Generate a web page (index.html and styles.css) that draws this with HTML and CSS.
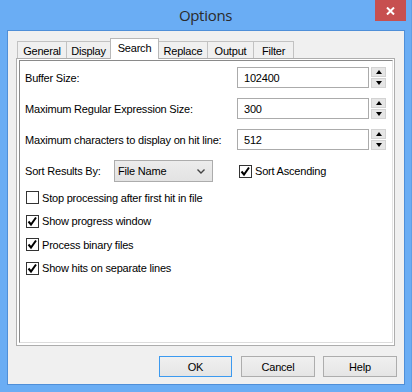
FILE: index.html
```html
<!DOCTYPE html>
<html>
<head>
<meta charset="utf-8">
<link rel="stylesheet" href="styles.css">
</head>
<body>
<div class="window">
  <div class="titlebar">
    <span class="title">Options</span>
    <div class="close">
      <svg width="9" height="8" viewBox="0 0 9 8"><path d="M1 0.5 L8 7.5 M8 0.5 L1 7.5" stroke="#fff" stroke-width="2" fill="none"/></svg>
    </div>
  </div>
  <div class="client">
    <div class="tabs">
      <div class="tab t-general">General</div>
      <div class="tab t-display">Display</div>
      <div class="tab t-search active">Search</div>
      <div class="tab t-replace">Replace</div>
      <div class="tab t-output">Output</div>
      <div class="tab t-filter">Filter</div>
    </div>
    <div class="panel">
      <div class="page">
        <div class="row">
          <span class="label">Buffer Size:</span>
          <div class="field">102400</div>
          <div class="spin"><div class="spin-btn"><span class="tri up"></span></div><div class="spin-btn"><span class="tri down"></span></div></div>
        </div>
        <div class="row">
          <span class="label">Maximum Regular Expression Size:</span>
          <div class="field">300</div>
          <div class="spin"><div class="spin-btn"><span class="tri up"></span></div><div class="spin-btn"><span class="tri down"></span></div></div>
        </div>
        <div class="row">
          <span class="label">Maximum characters to display on hit line:</span>
          <div class="field">512</div>
          <div class="spin"><div class="spin-btn"><span class="tri up"></span></div><div class="spin-btn"><span class="tri down"></span></div></div>
        </div>
        <div class="row sortrow">
          <span class="sortlabel">Sort Results By:</span>
          <div class="combo"><span>File Name</span>
            <svg width="8" height="5" viewBox="0 0 8 5"><path d="M0.5 0.5 L4 4 L7.5 0.5" stroke="#444" stroke-width="1.4" fill="none"/></svg>
          </div>
          <label class="check sortcheck"><span class="box checked"><svg width="11" height="11" viewBox="0 0 11 11"><path d="M1.5 5.5 L4 8.5 L9 1.5" stroke="#000" stroke-width="2" fill="none"/></svg></span>Sort Ascending</label>
        </div>
        <div class="checks">
          <label class="check"><span class="box"></span>Stop processing after first hit in file</label>
          <label class="check"><span class="box checked"><svg width="11" height="11" viewBox="0 0 11 11"><path d="M1.5 5.5 L4 8.5 L9 1.5" stroke="#000" stroke-width="2" fill="none"/></svg></span>Show progress window</label>
          <label class="check"><span class="box checked"><svg width="11" height="11" viewBox="0 0 11 11"><path d="M1.5 5.5 L4 8.5 L9 1.5" stroke="#000" stroke-width="2" fill="none"/></svg></span>Process binary files</label>
          <label class="check"><span class="box checked"><svg width="11" height="11" viewBox="0 0 11 11"><path d="M1.5 5.5 L4 8.5 L9 1.5" stroke="#000" stroke-width="2" fill="none"/></svg></span>Show hits on separate lines</label>
        </div>
      </div>
    </div>
    <div class="buttons">
      <div class="btn default">OK</div>
      <div class="btn">Cancel</div>
      <div class="btn">Help</div>
    </div>
  </div>
</div>
</body>
</html>
```

FILE: styles.css
```css
* { box-sizing: border-box; }
html, body { margin: 0; padding: 0; }
body {
  width: 412px;
  height: 392px;
  overflow: hidden;
  font-family: "Liberation Sans", Arial, sans-serif;
  font-size: 11px;
  letter-spacing: -0.2px;
  color: #000;
}
.window {
  width: 412px;
  height: 392px;
  background: #6aadf4;
  display: flex;
  flex-direction: column;
  padding: 0 7px 0 7px;
  border-right: 1px solid #5f9fe6;
}
.titlebar {
  position: relative;
  height: 30px;
  flex: none;
  display: flex;
  align-items: center;
  justify-content: center;
}
.title {
  font-family: "Open Sans", "Noto Sans", sans-serif;
  font-size: 15px;
  letter-spacing: -0.3px;
  color: #2b2b2b;
}
.close {
  position: absolute;
  top: 0;
  right: -2px;
  width: 31px;
  height: 21px;
  background: #c75050;
  display: flex;
  align-items: center;
  justify-content: center;
}
.close svg { display: block; }
.client {
  width: 398px;
  height: 355px;
  background: #f0f0f0;
  border: 1px solid #4f8fd8;
  display: flex;
  flex-direction: column;
  padding: 7px 7px 0 8px;
}
.tabs {
  display: flex;
  align-items: flex-end;
  height: 20px;
  margin-left: 1px;
  position: relative;
  z-index: 2;
}
.tab {
  height: 17px;
  border: 1px solid #c2c2c2;
  border-bottom: none;
  background: #f0f0f0;
  display: flex;
  align-items: center;
  justify-content: center;
  padding-top: 1px;
  margin-left: -1px;
  color: #000;
}
.tab:first-child { margin-left: 0; }
.tab.active {
  height: 21px;
  background: #fff;
  margin-bottom: -1px;
  padding-top: 0;
  padding-bottom: 3px;
  position: relative;
  z-index: 3;
  border-color: #b8b8b8;
}
.t-general { width: 50px; }
.t-display { width: 45px; }
.t-search { width: 49px; }
.t-replace { width: 50px; }
.t-output { width: 47px; }
.t-filter { width: 41px; }
.panel {
  width: 379px;
  height: 288px;
  border: 1px solid #adadad;
  background: #fff;
  padding: 1px 1px 2px 2px;
  position: relative;
  z-index: 1;
}
.page {
  height: 100%;
  border-top: 1px solid #8a8a8a;
  border-left: 1px solid #8a8a8a;
  border-right: 1px solid #e3e3e3;
  border-bottom: 1px solid #dcdcdc;
  padding: 6px 6px 0 5px;
  display: flex;
  flex-direction: column;
  gap: 10px;
}
.row {
  display: flex;
  align-items: center;
  height: 21px;
}
.label { flex: 1; }
.field {
  width: 132px;
  height: 21px;
  border: 1px solid #ababab;
  background: #fff;
  padding-left: 6px;
  display: flex;
  align-items: center;
}
.spin {
  width: 15px;
  height: 21px;
  margin-left: 2px;
  display: flex;
  flex-direction: column;
  gap: 1px;
}
.spin-btn {
  flex: 1;
  background: #e6e6e6;
  border: 1px solid #d3d3d3;
  display: flex;
  align-items: center;
  justify-content: center;
}
.tri {
  width: 0;
  height: 0;
  border-left: 3.5px solid transparent;
  border-right: 3.5px solid transparent;
}
.tri.up { border-bottom: 4px solid #000; }
.tri.down { border-top: 4px solid #000; }
.sortrow { height: 22px; }
.sortlabel { width: 89px; flex: none; }
.combo {
  width: 99px;
  height: 22px;
  border: 1px solid #acacac;
  background: linear-gradient(#ececec, #e3e3e3);
  display: flex;
  align-items: center;
  justify-content: space-between;
  padding: 0 7px 0 3px;
}
.combo svg { display: block; }
.check {
  display: flex;
  align-items: center;
  gap: 3px;
}
.sortcheck { margin-left: 26px; }
.box {
  width: 13px;
  height: 13px;
  border: 1px solid #333;
  background: #fff;
  flex: none;
  display: flex;
  align-items: center;
  justify-content: center;
}
.box svg { display: block; }
.checks {
  display: flex;
  flex-direction: column;
  margin-top: -6px;
  padding-left: 1px;
}
.checks .check { height: 23.5px; gap: 3px; }
.buttons {
  display: flex;
  justify-content: flex-end;
  gap: 8px;
  margin-top: 10px;
}
.btn {
  width: 74px;
  height: 21px;
  border: 1px solid #adadad;
  background: linear-gradient(#f0f0f0, #e5e5e5);
  display: flex;
  align-items: center;
  justify-content: center;
}
.btn.default { width: 73px; border-color: #3c9af0; margin-right: 1px; }
```
